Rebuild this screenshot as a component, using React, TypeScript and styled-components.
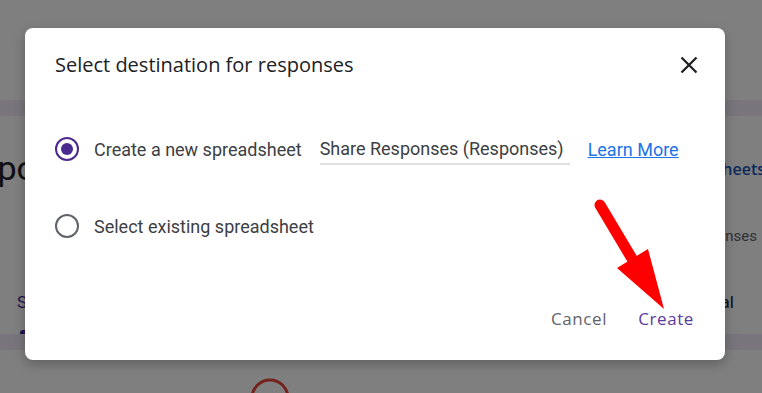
import React from 'react';
import styled, { createGlobalStyle } from 'styled-components';

const GlobalStyle = createGlobalStyle`
  html, body {
    margin: 0;
    padding: 0;
    width: 762px;
    height: 393px;
    overflow: hidden;
    background: #ffffff;
  }
  body {
    font-family: Roboto, "Liberation Sans", Arial, sans-serif;
  }
`;

const Page = styled.div`
  position: relative;
  width: 762px;
  height: 393px;
  overflow: hidden;
`;

// --- the forms page behind the modal ---
const Back = styled.div`
  display: flex;
  flex-direction: column;
  width: 100%;
  height: 100%;
  background: #ffffff;
`;

const TopArea = styled.div`
  height: 100px;
  flex-shrink: 0;
`;

const Band = styled.div`
  height: 16px;
  flex-shrink: 0;
  background: #f0ebf8;
`;

const Card = styled.div`
  height: 218px;
  flex-shrink: 0;
  display: flex;
  flex-direction: column;
  padding-top: 32px;
  box-sizing: border-box;
  margin: 0 -3px 0 -66px;
`;

const CardRow = styled.div<{ $end?: boolean; $height: number }>`
  display: flex;
  align-items: center;
  justify-content: ${(p) => (p.$end ? 'flex-end' : 'space-between')};
  height: ${(p) => p.$height}px;
  padding-right: ${(p) => (p.$end ? 8 : 0)}px;
`;

const Heading = styled.div`
  font-size: 34px;
  color: #202124;
  margin-left: 7px;
`;

const SheetsLink = styled.div`
  font-family: "Open Sans", Roboto, sans-serif;
  font-size: 16px;
  font-weight: 600;
  color: #1a53b8;
  margin-top: 2px;
`;

const Muted = styled.div`
  font-size: 15px;
  color: #5f6368;
`;

const Tabs = styled.div`
  display: flex;
  justify-content: space-between;
  padding: 0 31px 0 83px;
  margin-top: auto;
  height: 52px;
  align-items: flex-end;
`;

const Tab = styled.div<{ $active?: boolean }>`
  position: relative;
  font-size: 17px;
  color: ${(p) => (p.$active ? '#4527a0' : '#202124')};
  padding-bottom: 22px;

  &::after {
    content: '';
    display: ${(p) => (p.$active ? 'block' : 'none')};
    position: absolute;
    left: 3px;
    right: 0;
    bottom: 0;
    height: 4px;
    border-radius: 3px 3px 0 0;
    background: #4527a0;
  }
`;

const Bottom = styled.div`
  display: flex;
  padding: 27px 0 0 249px;
`;

// --- modal ---
const Overlay = styled.div`
  position: absolute;
  inset: 0;
  background: rgba(0, 0, 0, 0.5);
  display: flex;
  align-items: flex-start;
  padding: 28px 0 0 25px;
`;

const Dialog = styled.div`
  width: 700px;
  height: 332px;
  background: #ffffff;
  border-radius: 8px;
  display: flex;
  flex-direction: column;
  box-shadow: 0 4px 12px rgba(0, 0, 0, 0.25);
`;

const Header = styled.div`
  display: flex;
  align-items: center;
  justify-content: space-between;
  padding: 23px 24px 0 30px;
`;

const Title = styled.h2`
  margin: 0;
  font-family: "Open Sans", Roboto, sans-serif;
  font-size: 20px;
  font-weight: 400;
  color: #202124;
`;

const CloseButton = styled.button`
  width: 24px;
  height: 24px;
  padding: 0;
  border: none;
  background: none;
  display: flex;
  align-items: center;
  justify-content: center;
  cursor: pointer;
`;

const Options = styled.div`
  display: flex;
  flex-direction: column;
  gap: 49px;
  padding-left: 30px;
  margin-top: 55px;
`;

const OptionRow = styled.label`
  display: flex;
  align-items: center;
  min-height: 24px;
  font-size: 18px;
  color: #3c4043;
  cursor: pointer;
`;

const Radio = styled.span<{ $checked?: boolean }>`
  width: 24px;
  height: 24px;
  box-sizing: border-box;
  border-radius: 50%;
  border: 2.5px solid ${(p) => (p.$checked ? '#4a2a8e' : '#5f6368')};
  display: flex;
  align-items: center;
  justify-content: center;
  margin-right: 15px;
  flex-shrink: 0;

  &::after {
    content: '';
    display: ${(p) => (p.$checked ? 'block' : 'none')};
    width: 12px;
    height: 12px;
    border-radius: 50%;
    background: #4a2a8e;
  }
`;

const NameField = styled.div`
  width: 250px;
  height: 32px;
  box-sizing: border-box;
  margin-left: 18px;
  border-bottom: 2px solid #e0e0e0;
  display: flex;
  align-items: center;
  padding-top: 1px;
  color: #3c4043;
`;

const LearnMore = styled.a`
  margin-left: 18px;
  color: #1a73e8;
  text-decoration: underline;
`;

const Footer = styled.div`
  margin-top: auto;
  display: flex;
  justify-content: flex-end;
  gap: 15px;
  padding: 0 23px 24px 0;
`;

const TextButton = styled.button<{ $primary?: boolean }>`
  height: 36px;
  padding: 0 8px;
  border: none;
  background: none;
  font-family: "Open Sans", Roboto, sans-serif;
  font-size: 17px;
  font-weight: 500;
  letter-spacing: 0.6px;
  color: ${(p) => (p.$primary ? '#5b3a9e' : '#5f6368')};
  cursor: pointer;
`;

const Annotation = styled.svg`
  position: absolute;
  left: 0;
  top: 0;
  pointer-events: none;
`;

export default function App() {
  return (
    <Page>
      <GlobalStyle />
      <Back>
        <TopArea />
        <Band />
        <Card>
          <CardRow $height={40}>
            <Heading>Responses</Heading>
            <SheetsLink>Link to Sheets</SheetsLink>
          </CardRow>
          <CardRow $end $height={98}>
            <Muted>Accepting responses</Muted>
          </CardRow>
          <Tabs>
            <Tab $active>Summary</Tab>
            <Tab>Question</Tab>
            <Tab>Individual</Tab>
          </Tabs>
        </Card>
        <Band />
        <Bottom>
          <svg width="42" height="42" viewBox="0 0 42 42">
            <circle cx="21" cy="21" r="18" fill="none" stroke="#e8453c" strokeWidth="3" />
          </svg>
        </Bottom>
      </Back>

      <Overlay>
        <Dialog>
          <Header>
            <Title>Select destination for responses</Title>
            <CloseButton aria-label="Close">
              <svg width="18" height="18" viewBox="0 0 18 18">
                <path d="M1.5 1.5 L16.5 16.5 M16.5 1.5 L1.5 16.5" stroke="#202124" strokeWidth="2.3" />
              </svg>
            </CloseButton>
          </Header>
          <Options>
            <OptionRow>
              <Radio $checked />
              Create a new spreadsheet
              <NameField>Share Responses (Responses)</NameField>
              <LearnMore href="#">Learn More</LearnMore>
            </OptionRow>
            <OptionRow>
              <Radio />
              Select existing spreadsheet
            </OptionRow>
          </Options>
          <Footer>
            <TextButton>Cancel</TextButton>
            <TextButton $primary>Create</TextButton>
          </Footer>
        </Dialog>
      </Overlay>

      <Annotation width="762" height="393" viewBox="0 0 762 393">
        <line x1="600" y1="205" x2="634" y2="262" stroke="#ff0000" strokeWidth="11" strokeLinecap="round" />
        <polygon points="617,268 648,249 664,309" fill="#ff0000" />
      </Annotation>
    </Page>
  );
}
